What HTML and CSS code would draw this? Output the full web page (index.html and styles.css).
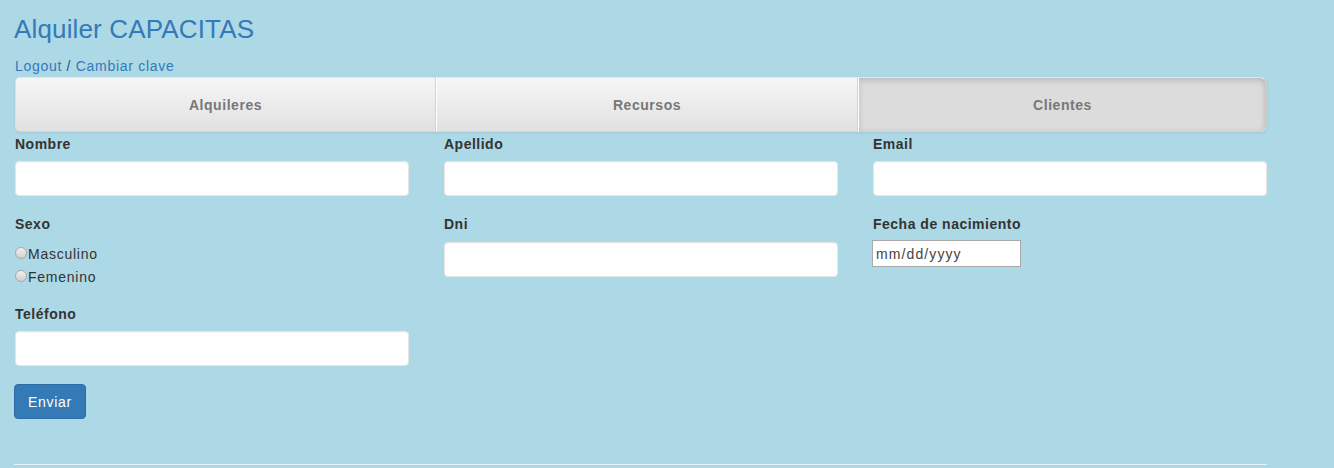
FILE: index.html
```html
<!DOCTYPE html>
<html lang="es">
<head>
<meta charset="utf-8">
<title>Alquiler CAPACITAS</title>
<link rel="stylesheet" href="styles.css">
</head>
<body>
<div class="container">
  <h1 class="title">Alquiler CAPACITAS</h1>
  <div class="userlinks"><a href="#">Logout</a><span class="sep"> / </span><a href="#">Cambiar clave</a></div>
  <nav class="tabs">
    <a class="tab tab-first" href="#">Alquileres</a>
    <a class="tab tab-mid" href="#">Recursos</a>
    <a class="tab tab-last active" href="#">Clientes</a>
  </nav>
  <form class="form">
    <div class="group">
      <label class="lbl">Nombre</label>
      <input class="ctrl" type="text">
    </div>
    <div class="group">
      <label class="lbl">Apellido</label>
      <input class="ctrl" type="text">
    </div>
    <div class="group">
      <label class="lbl">Email</label>
      <input class="ctrl" type="text">
    </div>

    <div class="group group-radio">
      <label class="lbl">Sexo</label>
      <div class="radios">
        <label class="radio"><span class="dot"></span>Masculino</label>
        <label class="radio"><span class="dot"></span>Femenino</label>
      </div>
    </div>
    <div class="group">
      <label class="lbl lbl-dni">Dni</label>
      <input class="ctrl" type="text">
    </div>
    <div class="group">
      <label class="lbl">Fecha de nacimiento</label>
      <input class="date" type="text" value="mm/dd/yyyy" readonly>
    </div>

    <div class="group">
      <label class="lbl">Teléfono</label>
      <input class="ctrl" type="text">
    </div>
    <div class="group-empty"></div>
    <div class="group-empty"></div>

    <div class="actions">
      <button class="btn" type="button">Enviar</button>
    </div>
  </form>
  <hr class="rule">
</div>
</body>
</html>
```

FILE: styles.css
```css
html, body {
  margin: 0;
  padding: 0;
}
body {
  background: #add8e6;
  font-family: "Liberation Sans", Arial, Helvetica, sans-serif;
  font-size: 14px;
  line-height: 20px;
  color: #333;
}
.container {
  width: 1252px;
  padding-left: 15px;
}
.title {
  margin: 15px 0 0 -1px;
  font-size: 26px;
  line-height: 28px;
  letter-spacing: 0.15px;
  font-weight: normal;
  color: #337ab7;
}
.userlinks {
  margin-top: 13px;
  height: 20px;
  line-height: 20px;
  letter-spacing: 0.7px;
  color: #337ab7;
}
.userlinks a {
  color: #337ab7;
  text-decoration: none;
}
.userlinks .sep {
  color: #23527c;
}
.tabs {
  display: flex;
  height: 55px;
  margin-top: 1px;
  box-shadow: 0 1px 3px rgba(0, 0, 0, 0.08);
  border-radius: 5px;
}
.tab {
  display: flex;
  align-items: center;
  justify-content: center;
  box-sizing: border-box;
  height: 55px;
  background: linear-gradient(#f6f6f6, #e1e1e1);
  border-top: 1px solid #e6e6e6;
  border-bottom: 1px solid #d6d6d6;
  color: #777;
  font-weight: bold;
  letter-spacing: 0.55px;
  text-decoration: none;
}
.tab-first {
  width: 421px;
  border-left: 1px solid #e0e0e0;
  border-right: 1px solid #d2d2d2;
  border-radius: 5px 0 0 5px;
}
.tab-mid {
  width: 422px;
  border-left: 1px solid #fff;
  border-right: 1px solid #d2d2d2;
}
.tab-last {
  flex: 1;
  border-left: 1px solid #fff;
  border-right: 1px solid #cfcfcf;
  border-radius: 0 7px 7px 0;
}
.tab.active {
  background: #dcdcdc;
  box-shadow: inset 0 3px 6px rgba(0, 0, 0, 0.12), inset -2px 0 4px rgba(0, 0, 0, 0.06);
}
.form {
  display: grid;
  grid-template-columns: 394px 394px 394px;
  column-gap: 35px;
}
.group {
  padding-top: 2px;
  margin-bottom: 16px;
  display: flex;
  flex-direction: column;
  align-items: flex-start;
}
.group-radio {
  margin-bottom: 13px;
}
.lbl {
  display: block;
  font-weight: bold;
  letter-spacing: 0.5px;
  margin-bottom: 7px;
  color: #333;
}
.lbl-dni {
  margin-bottom: 8px;
}
.ctrl {
  box-sizing: border-box;
  width: 394px;
  height: 35px;
  margin: 0;
  padding: 6px 12px;
  background: #fff;
  border: 1px solid #e6e6e6;
  border-radius: 4px;
  box-shadow: inset 0 1px 1px rgba(0, 0, 0, 0.03);
  font: inherit;
}
.radios {
  margin-top: 2px;
  display: flex;
  flex-direction: column;
}
.radio {
  display: flex;
  align-items: flex-start;
  height: 23px;
  line-height: 23px;
  letter-spacing: 0.75px;
  color: #333;
}
.dot {
  box-sizing: border-box;
  width: 12px;
  height: 12px;
  margin-top: 4px;
  margin-right: 1px;
  border-radius: 50%;
  border: 1px solid #a8a8a8;
  background: linear-gradient(#f2f2f2, #cfcfcf);
}
.date {
  box-sizing: border-box;
  width: 149px;
  height: 27px;
  margin: -1px 0 0 -1px;
  padding: 1px 3px;
  border: 1px solid #a9a9a9;
  background: #fff;
  font-family: "Liberation Sans", Arial, sans-serif;
  font-size: 14px;
  letter-spacing: 1.1px;
  color: #444;
  outline: none;
}
.group-empty {
  display: block;
}
.actions {
  grid-column: 1 / 4;
  padding-top: 2px;
}
.btn {
  box-sizing: border-box;
  height: 35px;
  width: 72px;
  margin-left: -1px;
  padding: 6px 12px;
  background: #337ab7;
  border: 1px solid #2e6da4;
  border-radius: 4px;
  color: #fff;
  font-family: "Liberation Sans", Arial, sans-serif;
  font-size: 14px;
  letter-spacing: 0.7px;
}
.rule {
  margin: 45px 0 0 -1px;
  width: 1253px;
  border: 0;
  border-top: 1px solid #e6f3f7;
  height: 0;
}
```
